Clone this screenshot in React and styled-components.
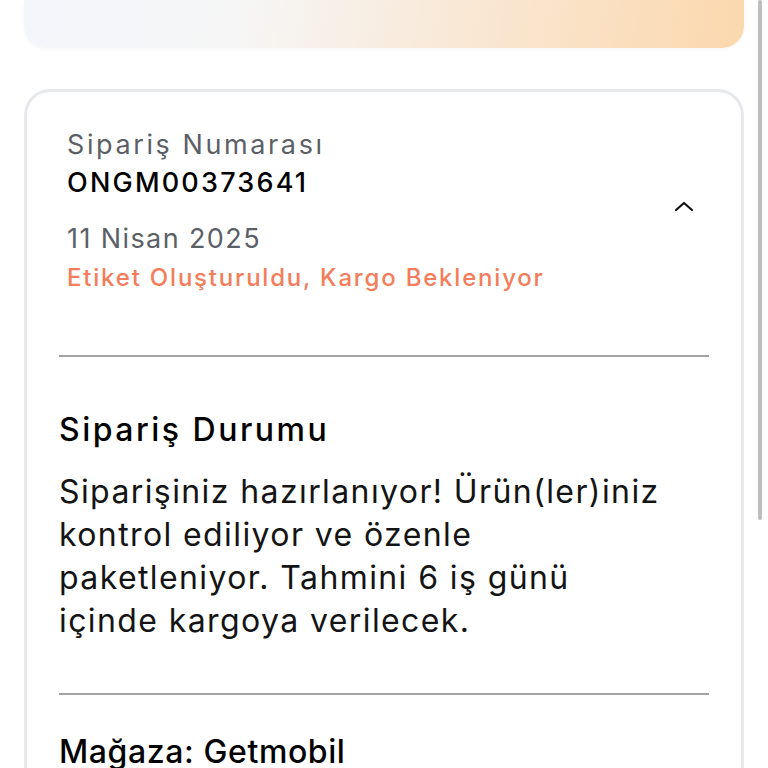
import React from "react";
import styled, { createGlobalStyle } from "styled-components";

const GlobalStyle = createGlobalStyle`
  html, body {
    margin: 0;
    padding: 0;
    background: #ffffff;
  }
  body {
    font-family: "Inter", "Noto Sans", sans-serif;
    color: #111111;
    overflow: hidden;
  }
`;

const Page = styled.div`
  position: relative;
  width: 768px;
  height: 768px;
  overflow: hidden;
  padding: 0 24px;
  box-sizing: border-box;
`;

const Banner = styled.div`
  height: 48px;
  border-radius: 0 0 22px 22px;
  background: linear-gradient(100deg, #f3f6fb 0%, #f6f6f6 30%, #f9e8d6 60%, #fbd8ad 100%);
  box-shadow: 0 2px 4px rgba(0, 0, 0, 0.03);
`;

const Card = styled.section`
  margin-top: 41px;
  border: 3px solid #e6e8ec;
  border-bottom: none;
  border-radius: 26px 26px 0 0;
  padding: 0 32px 40px 32px;
  min-height: 700px;
`;

const Header = styled.div`
  display: flex;
  align-items: center;
  justify-content: space-between;
  padding: 34px 14px 57px 8px;
  border-bottom: 2px solid #a3a3a3;
`;

const HeaderInfo = styled.div`
  display: flex;
  flex-direction: column;
`;

const Label = styled.div`
  font-size: 27px;
  line-height: 38px;
  color: #5c5f66;
  letter-spacing: ${(p) => p.$spacing || "2.6px"};
`;

const OrderNo = styled.div`
  font-size: 27px;
  line-height: 38px;
  font-weight: 500;
  color: #000;
  letter-spacing: 2.2px;
  margin-bottom: 18px;
`;

const Status = styled.div`
  font-size: 24px;
  line-height: 40px;
  font-weight: 500;
  color: #f47d5b;
  letter-spacing: 1.8px;
`;

const Toggle = styled.button`
  border: none;
  background: none;
  padding: 0;
  display: flex;
  align-items: center;
  cursor: pointer;
  margin-bottom: 12px;
`;

const Section = styled.div`
  padding: ${(p) => p.$pad || "53px 0 51px"};
  border-bottom: ${(p) => (p.$last ? "none" : "2px solid #a3a3a3")};
`;

const Title = styled.h3`
  margin: 0 0 20px;
  font-size: 32px;
  line-height: 40px;
  font-weight: 500;
  color: #000;
  letter-spacing: ${(p) => p.$spacing || "2.5px"};
`;

const Text = styled.p`
  margin: 0;
  max-width: 610px;
  font-size: 32px;
  line-height: 43px;
  font-weight: 400;
  color: #141414;
  letter-spacing: 1.4px;
`;

const ScrollBar = styled.div`
  position: absolute;
  top: 0;
  right: 6px;
  width: 4px;
  height: 520px;
  border-radius: 2px;
  background: #bdbdbd;
`;

const ChevronUp = () => (
  <svg width="22" height="14" viewBox="0 0 22 14" fill="none">
    <path d="M3 11 L11 4 L19 11" stroke="#111" strokeWidth="2.2" strokeLinecap="round" strokeLinejoin="round" />
  </svg>
);

export default function App() {
  return (
    <>
      <GlobalStyle />
      <Page>
        <Banner />
        <Card>
          <Header>
            <HeaderInfo>
              <Label>Sipariş Numarası</Label>
              <OrderNo>ONGM00373641</OrderNo>
              <Label $spacing="1.4px">11 Nisan 2025</Label>
              <Status>Etiket Oluşturuldu, Kargo Bekleniyor</Status>
            </HeaderInfo>
            <Toggle aria-label="Daralt">
              <ChevronUp />
            </Toggle>
          </Header>
          <Section>
            <Title>Sipariş Durumu</Title>
            <Text>
              Siparişiniz hazırlanıyor! Ürün(ler)iniz kontrol ediliyor ve özenle
              paketleniyor. Tahmini 6 iş günü içinde kargoya verilecek.
            </Text>
          </Section>
          <Section $last $pad="37px 0 0">
            <Title $spacing="0.6px">Mağaza: Getmobil</Title>
          </Section>
        </Card>
        <ScrollBar />
      </Page>
    </>
  );
}
